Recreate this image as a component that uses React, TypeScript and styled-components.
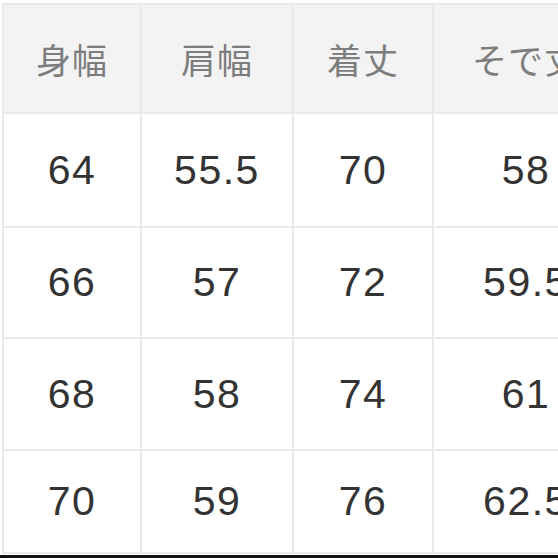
import React from "react";
import styled, { createGlobalStyle } from "styled-components";

// size chart rows: 身幅 / 肩幅 / 着丈 / そで丈
const headers = ["身幅", "肩幅", "着丈", "そで丈"];
const rows: string[][] = [
  ["64", "55.5", "70", "58"],
  ["66", "57", "72", "59.5"],
  ["68", "58", "74", "61"],
  ["70", "59", "76", "62.5"],
];

const App: React.FC = () => {
  return (
    <>
      <GlobalStyle />
      <Frame>
        <TableArea>
          <SizeGrid>
            {headers.map((h) => (
              <HeadCell key={h}>{h}</HeadCell>
            ))}
            {rows.map((row, i) =>
              row.map((value, j) => <Cell key={`${i}-${j}`}>{value}</Cell>)
            )}
          </SizeGrid>
        </TableArea>
        <BottomEdge />
      </Frame>
    </>
  );
};

export default App;

// Styled Components
const GlobalStyle = createGlobalStyle`
  html, body {
    margin: 0;
    padding: 0;
    background: #ffffff;
  }
`;

const Frame = styled.div`
  width: 558px;
  height: 558px;
  overflow: hidden;
  display: flex;
  flex-direction: column;
  background: #ffffff;
`;

const TableArea = styled.div`
  flex: 1;
  overflow: hidden;
  padding: 3px 0 0 2px;
`;

const SizeGrid = styled.div`
  display: grid;
  grid-template-columns: 136px 150px 138px 184px;
  grid-template-rows: 107px 112px 109px 110px 101px;
  gap: 2px;
  padding: 2px;
  width: max-content;
  background: #e9e9e9;
`;

const HeadCell = styled.div`
  display: flex;
  align-items: center;
  justify-content: center;
  background: #f3f3f3;
  color: #7d7d7d;
  font-family: "Noto Sans CJK JP", "Liberation Sans", sans-serif;
  font-size: 35px;
  letter-spacing: 1px;
`;

const Cell = styled.div`
  display: flex;
  align-items: center;
  justify-content: center;
  background: #ffffff;
  color: #333333;
  font-family: "Liberation Sans", Arial, sans-serif;
  font-size: 41px;
  letter-spacing: 1.5px;
`;

const BottomEdge = styled.div`
  height: 3px;
  flex-shrink: 0;
  background: #111111;
`;
